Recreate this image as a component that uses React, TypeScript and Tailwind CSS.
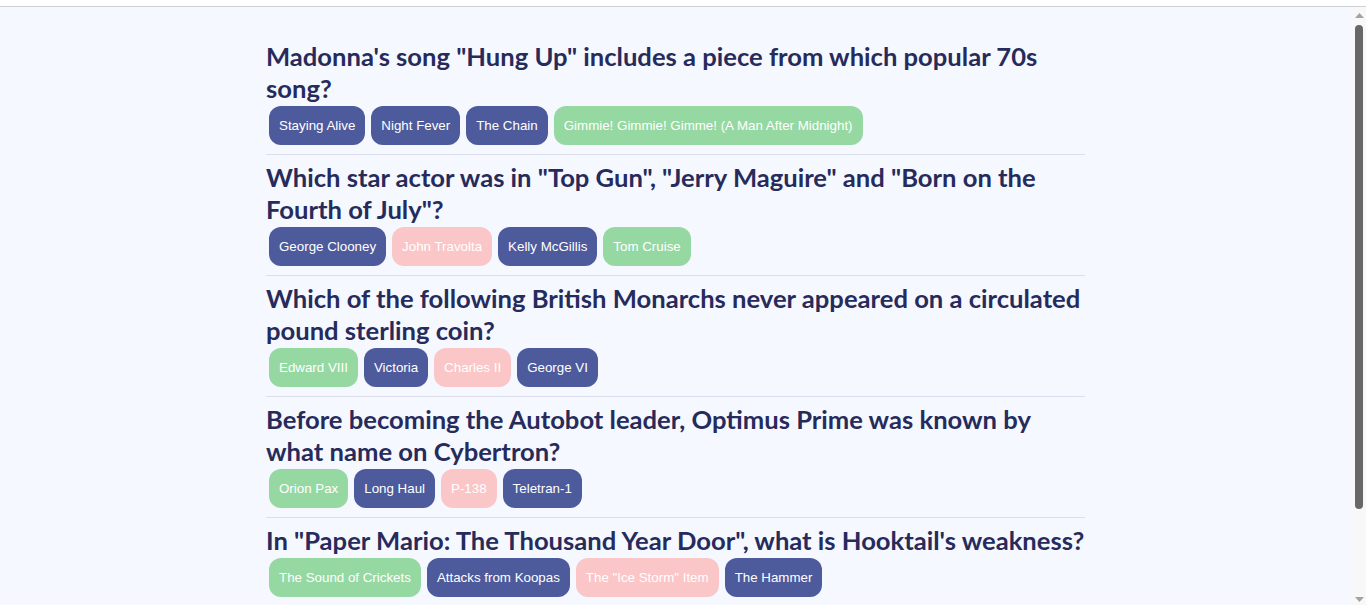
import React from "react";

type Question = {
  text: string;
  answers: { label: string; state: "none" | "correct" | "wrong" }[];
};

const questions: Question[] = [
  {
    text: 'Madonna\'s song "Hung Up" includes a piece from which popular 70s song?',
    answers: [
      { label: "Staying Alive", state: "none" },
      { label: "Night Fever", state: "none" },
      { label: "The Chain", state: "none" },
      { label: "Gimmie! Gimmie! Gimme! (A Man After Midnight)", state: "correct" },
    ],
  },
  {
    text: 'Which star actor was in "Top Gun", "Jerry Maguire" and "Born on the Fourth of July"?',
    answers: [
      { label: "George Clooney", state: "none" },
      { label: "John Travolta", state: "wrong" },
      { label: "Kelly McGillis", state: "none" },
      { label: "Tom Cruise", state: "correct" },
    ],
  },
  {
    text: "Which of the following British Monarchs never appeared on a circulated pound sterling coin?",
    answers: [
      { label: "Edward VIII", state: "correct" },
      { label: "Victoria", state: "none" },
      { label: "Charles II", state: "wrong" },
      { label: "George VI", state: "none" },
    ],
  },
  {
    text: "Before becoming the Autobot leader, Optimus Prime was known by what name on Cybertron?",
    answers: [
      { label: "Orion Pax", state: "correct" },
      { label: "Long Haul", state: "none" },
      { label: "P-138", state: "wrong" },
      { label: "Teletran-1", state: "none" },
    ],
  },
  {
    text: 'In "Paper Mario: The Thousand Year Door", what is Hooktail\'s weakness?',
    answers: [
      { label: "The Sound of Crickets", state: "correct" },
      { label: "Attacks from Koopas", state: "none" },
      { label: 'The "Ice Storm" Item', state: "wrong" },
      { label: "The Hammer", state: "none" },
    ],
  },
];

const answerColor = {
  none: "bg-[#4d5a9c]",
  correct: "bg-[#96d8a2]",
  wrong: "bg-[#fbc6c7]",
};

function Scrollbar() {
  return (
    <div className="w-[15px] shrink-0 bg-[#f8f8f8] flex flex-col items-center">
      <svg className="mt-[6px] ml-px" width="9" height="5" viewBox="0 0 9 5">
        <polygon points="4.5,0 9,5 0,5" fill="#a3a3a3" />
      </svg>
      <div className="mt-[7px] ml-px w-[8px] h-[484px] rounded-full bg-[#686868]" />
      <div className="flex-1" />
      <svg className="mb-[3px] ml-px" width="9" height="5" viewBox="0 0 9 5">
        <polygon points="0,0 9,0 4.5,5" fill="#a3a3a3" />
      </svg>
    </div>
  );
}

export default function App() {
  return (
    <div className="h-[605px] flex flex-col overflow-hidden bg-[#f5f8fe]">
      <div className="h-[7px] shrink-0 bg-white border-b border-[#cfd0d6]" />
      <div className="flex flex-1 min-h-0">
        <main className="flex-1 overflow-hidden">
          <div className="mx-auto max-w-[819px] pt-[27px] pb-[102px]">
            {questions.map((q) => (
              <div key={q.text} className="pt-[6px] pb-[9px] border-b border-[#dcdfeb]">
                <h2 className="text-[25.6px] leading-8 font-bold text-[#262b5c] font-['Lato',sans-serif]">
                  {q.text}
                </h2>
                <div className="mt-[2px] flex flex-wrap gap-[6px] pl-[3px]">
                  {q.answers.map((a) => (
                    <button
                      key={a.label}
                      className={`${answerColor[a.state]} h-[39px] px-[10px] rounded-[12px] text-white text-[13.33px] font-['Liberation_Sans',Arial,sans-serif]`}
                    >
                      {a.label}
                    </button>
                  ))}
                </div>
              </div>
            ))}
          </div>
        </main>
        <Scrollbar />
      </div>
    </div>
  );
}
